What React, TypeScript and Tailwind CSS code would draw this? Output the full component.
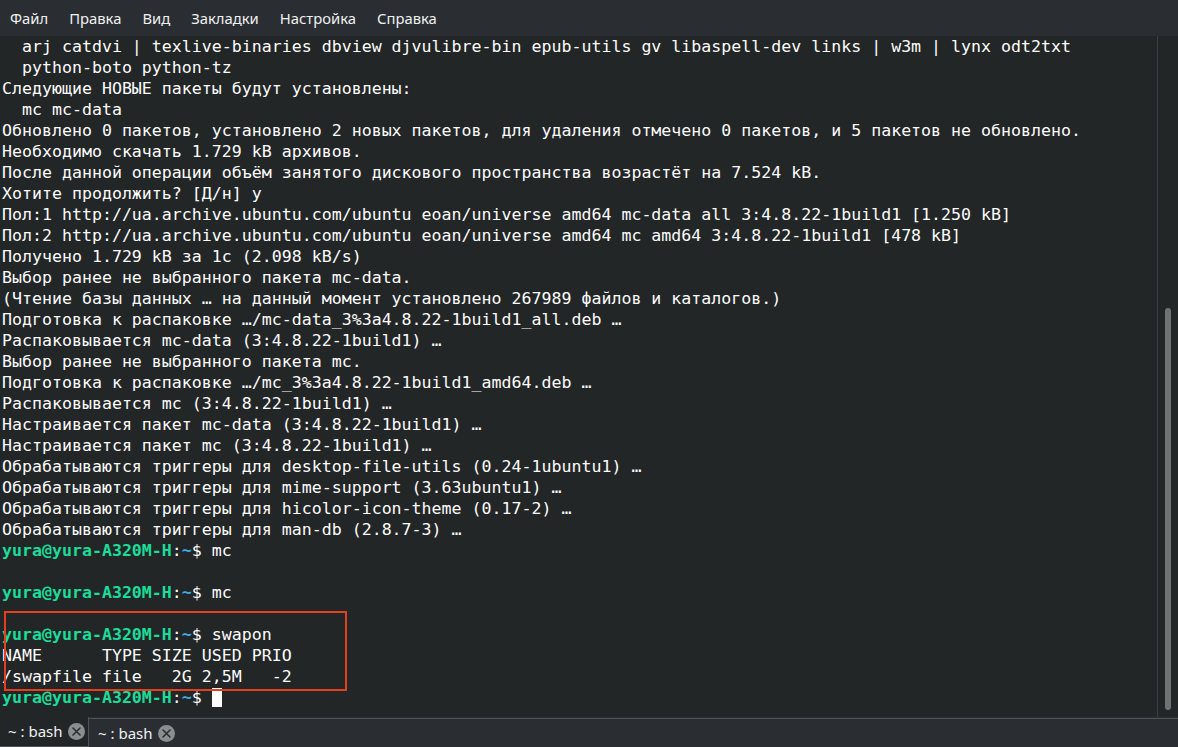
type Seg = { t: string; c?: string; b?: boolean };
type Line = Seg[] | string;

const prompt = (cmd: string): Seg[] => [
  { t: 'yura@yura-A320M-H', c: 'text-[#1cdc9a]', b: true },
  { t: ':' },
  { t: '~', c: 'text-[#3daee9]', b: true },
  { t: '$ ' + cmd },
];

const lines: Line[] = [
  '  arj catdvi | texlive-binaries dbview djvulibre-bin epub-utils gv libaspell-dev links | w3m | lynx odt2txt',
  '  python-boto python-tz',
  'Следующие НОВЫЕ пакеты будут установлены:',
  '  mc mc-data',
  'Обновлено 0 пакетов, установлено 2 новых пакетов, для удаления отмечено 0 пакетов, и 5 пакетов не обновлено.',
  'Необходимо скачать 1.729 kB архивов.',
  'После данной операции объём занятого дискового пространства возрастёт на 7.524 kB.',
  'Хотите продолжить? [Д/н] y',
  'Пол:1 http://ua.archive.ubuntu.com/ubuntu eoan/universe amd64 mc-data all 3:4.8.22-1build1 [1.250 kB]',
  'Пол:2 http://ua.archive.ubuntu.com/ubuntu eoan/universe amd64 mc amd64 3:4.8.22-1build1 [478 kB]',
  'Получено 1.729 kB за 1c (2.098 kB/s)',
  'Выбор ранее не выбранного пакета mc-data.',
  '(Чтение базы данных … на данный момент установлено 267989 файлов и каталогов.)',
  'Подготовка к распаковке …/mc-data_3%3a4.8.22-1build1_all.deb …',
  'Распаковывается mc-data (3:4.8.22-1build1) …',
  'Выбор ранее не выбранного пакета mc.',
  'Подготовка к распаковке …/mc_3%3a4.8.22-1build1_amd64.deb …',
  'Распаковывается mc (3:4.8.22-1build1) …',
  'Настраивается пакет mc-data (3:4.8.22-1build1) …',
  'Настраивается пакет mc (3:4.8.22-1build1) …',
  'Обрабатываются триггеры для desktop-file-utils (0.24-1ubuntu1) …',
  'Обрабатываются триггеры для mime-support (3.63ubuntu1) …',
  'Обрабатываются триггеры для hicolor-icon-theme (0.17-2) …',
  'Обрабатываются триггеры для man-db (2.8.7-3) …',
  prompt('mc'),
  '',
  prompt('mc'),
];

const boxed: Line[] = [
  '',
  prompt('swapon'),
  'NAME      TYPE SIZE USED PRIO',
  '/swapfile file   2G 2,5M   -2',
];

const menu = ['Файл', 'Правка', 'Вид', 'Закладки', 'Настройка', 'Справка'];

function TermLine({ line }: { line: Line }) {
  if (typeof line === 'string') {
    return <div className="h-[21px] whitespace-pre">{line || ' '}</div>;
  }
  return (
    <div className="h-[21px] whitespace-pre">
      {line.map((s, i) => (
        <span key={i} className={`${s.c ?? ''} ${s.b ? 'font-bold' : ''}`}>
          {s.t}
        </span>
      ))}
    </div>
  );
}

function CloseIcon() {
  return (
    <svg width="17" height="17" viewBox="0 0 17 17" className="shrink-0">
      <circle cx="8.5" cy="8.5" r="8.5" fill="#8b8e91" />
      <path d="M5 5 L12 12 M12 5 L5 12" stroke="#2a2e32" strokeWidth="1.6" strokeLinecap="round" />
    </svg>
  );
}

function Tab({ active }: { active?: boolean }) {
  return (
    <div
      className={
        active
          ? 'flex items-center gap-[5px] h-full w-[89px] pl-[8px] bg-[#232627] border-r border-b border-[#4f5356]'
          : 'flex items-center gap-[5px] h-[29px] w-[89px] pl-[9px] border-t border-[#4f5356] bg-[#2a2e32]'
      }
    >
      <span className="text-[15px] text-[#eff0f1]">~ : bash</span>
      <CloseIcon />
    </div>
  );
}

export default function App() {
  return (
    <div
      className="w-[1178px] h-[747px] flex flex-col bg-[#232627] overflow-hidden"
      style={{ fontFamily: '"Noto Sans", sans-serif' }}
    >
      {/* Menu bar */}
      <div className="h-[36px] flex items-center pl-[10px] gap-[21px] bg-[#2a2e32] text-[14.8px] text-[#eff0f1] shrink-0">
        {menu.map(m => (
          <span key={m}>{m}</span>
        ))}
      </div>

      {/* Terminal + scrollbar */}
      <div className="flex flex-1 min-h-0">
        <div
          className="flex-1 pl-[2px] text-[16.6px] leading-[21px] text-[#fcfcfc] overflow-hidden"
          style={{ fontFamily: '"DejaVu Sans Mono", monospace' }}
        >
          {lines.map((l, i) => (
            <TermLine key={i} line={l} />
          ))}
          <div className="relative">
            {boxed.map((l, i) => (
              <TermLine key={i} line={l} />
            ))}
            <div className="absolute left-[2px] top-[8px] w-[343px] h-[80px] border-2 border-[#e3401f]" />
          </div>
          <div className="h-[21px] whitespace-pre flex items-center">
            <span className="text-[#1cdc9a] font-bold">yura@yura-A320M-H</span>
            <span>:</span>
            <span className="text-[#3daee9] font-bold">~</span>
            <span>$ </span>
            <span className="inline-block w-[10px] h-[19px] bg-[#fcfcfc]" />
          </div>
        </div>
        <div className="w-[21px] border-l border-[#3b3f43] flex justify-center pt-[272px] pb-[7px]">
          <div className="w-[6px] h-[402px] rounded-full bg-[#6e7374]" />
        </div>
      </div>

      {/* Tab bar */}
      <div className="h-[30px] flex items-end bg-[#2a2e32] shrink-0">
        <Tab active />
        <Tab />
        <div className="flex-1 h-[29px] border-t border-[#4f5356]" />
      </div>
    </div>
  );
}
